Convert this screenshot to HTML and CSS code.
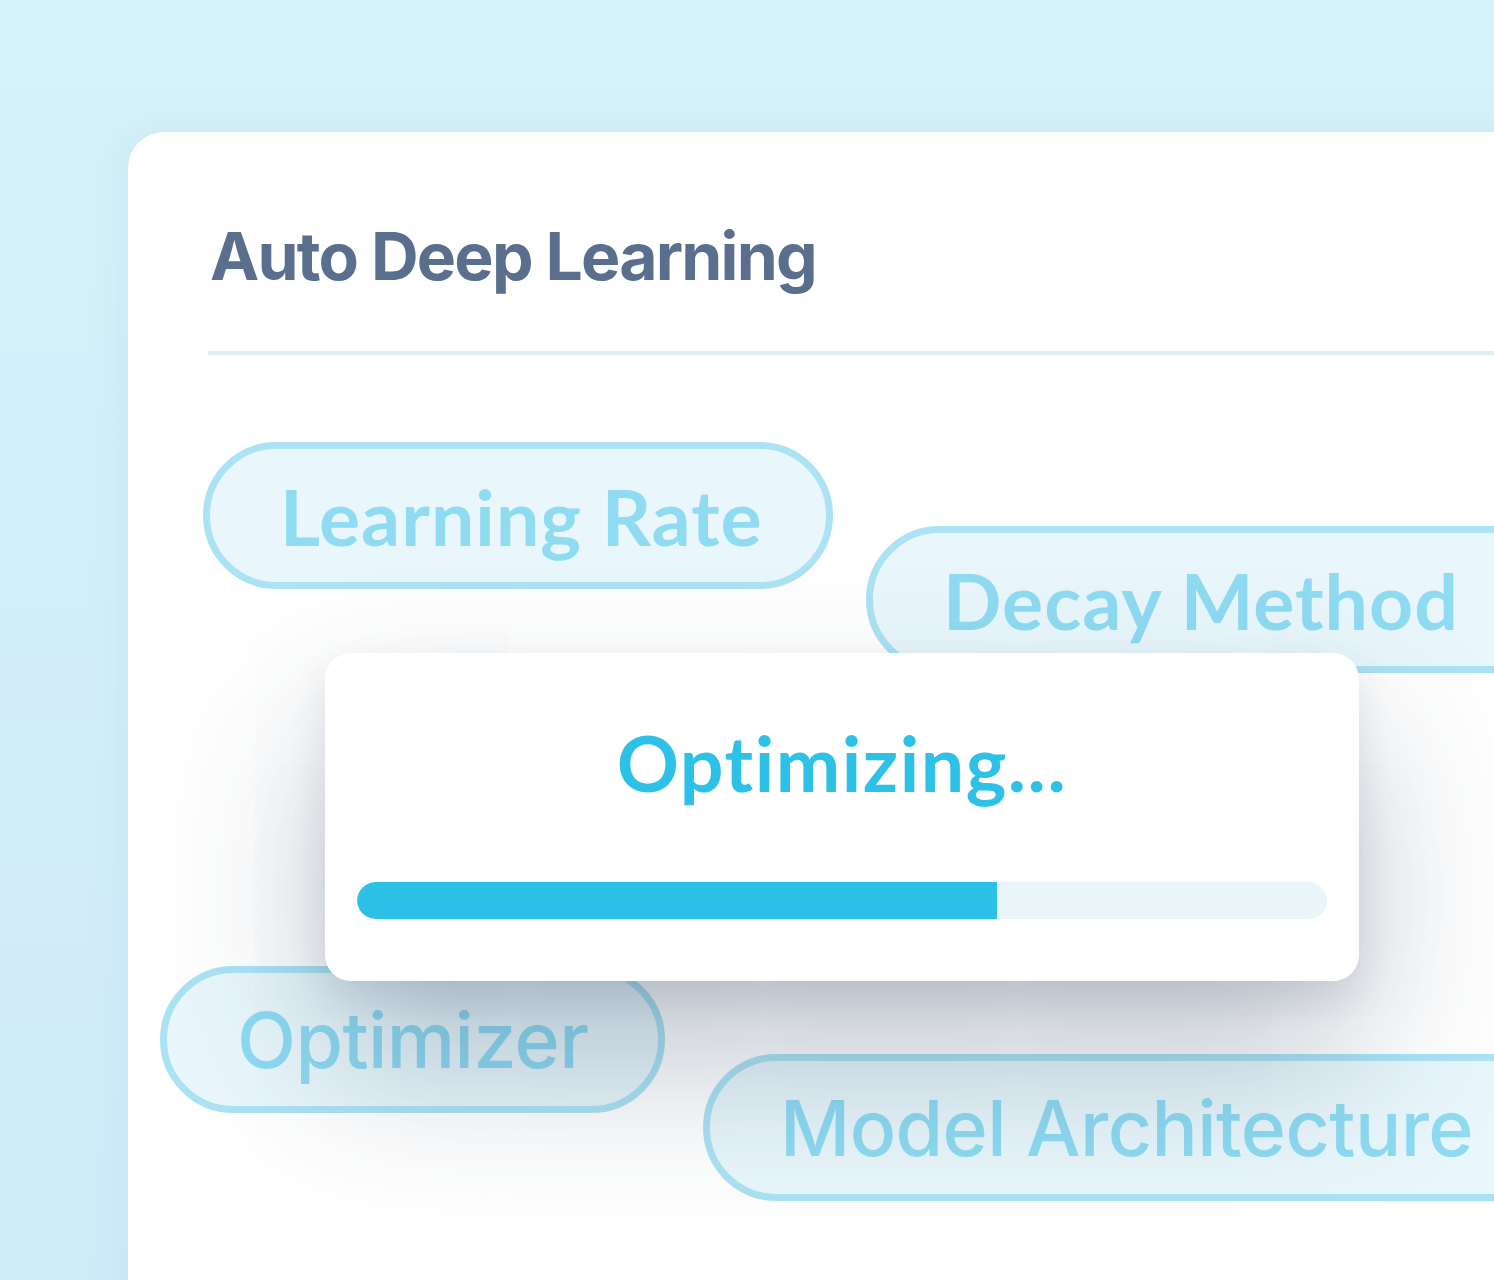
FILE: index.html
```html
<!DOCTYPE html>
<html lang="en">
<head>
<meta charset="utf-8">
<title>Auto Deep Learning</title>
<link rel="stylesheet" href="styles.css">
</head>
<body>
<div class="page">
  <section class="card">
    <h1 class="title">Auto Deep Learning</h1>
    <div class="divider"></div>
    <div class="canvas">
      <span class="pill pill-geo pill-lr">Learning Rate</span>
      <span class="pill pill-geo pill-dm">Decay Method</span>
      <span class="pill pill-grot pill-opt">Optimizer</span>
      <span class="pill pill-grot pill-ma">Model Architecture</span>
      <div class="modal">
        <div class="modal-title">Optimizing...</div>
        <div class="track"><div class="fill" style="width:66%"></div></div>
      </div>
    </div>
  </section>
</div>
</body>
</html>
```
FILE: styles.css
```css
html, body {
  margin: 0;
  padding: 0;
  width: 100%;
  height: 100%;
  overflow: hidden;
}
body {
  background: linear-gradient(180deg, #d6f2fa 0%, #d2eef9 50%, #d0ebf8 100%);
  font-family: "Inter", "Liberation Sans", sans-serif;
}
.page {
  padding: 132px 0 0 128px;
  height: 100%;
  box-sizing: border-box;
}
.card {
  width: 1500px;
  height: 1200px;
  background: #ffffff;
  border-top-left-radius: 36px;
  box-shadow: -6px 0 30px rgba(170, 215, 235, 0.25);
  overflow: hidden;
  display: flex;
  flex-direction: column;
  padding-left: 80px;
  box-sizing: border-box;
}
.title {
  margin: 84px 0 0 2px;
  font-family: "Inter", sans-serif;
  font-weight: 700;
  font-size: 66px;
  line-height: 80px;
  letter-spacing: -1.8px;
  color: #5a6e8e;
}
.divider {
  margin-top: 55px;
  height: 4px;
  background: #e2edf2;
}
.canvas {
  position: relative;
  flex: 1;
  margin-left: -80px;
}
.pill {
  position: absolute;
  height: 147px;
  box-sizing: border-box;
  border: 7px solid #abe3f4;
  background: #e9f7fc;
  border-radius: 80px;
  display: flex;
  align-items: center;
  white-space: nowrap;
  color: #8edbf2;
}
.pill-geo {
  font-family: "Lato", sans-serif;
  font-weight: 700;
  font-size: 77px;
  padding: 0 70px 0 70px;
  letter-spacing: 1px;
}
.pill-grot {
  font-family: "Inter", sans-serif;
  font-weight: 500;
  font-size: 77px;
  letter-spacing: -0.6px;
  padding: 0 70px 0 70px;
}
.pill-lr { left: 75px; top: 87px; width: 630px; }
.pill-dm { left: 738px; top: 171px; width: 800px; }
.pill-opt { left: 32px; top: 611px; width: 505px; }
.pill-ma { left: 575px; top: 699px; width: 900px; }
.modal {
  position: absolute;
  left: 197px;
  top: 298px;
  width: 1034px;
  height: 328px;
  background: #ffffff;
  border-radius: 26px;
  box-shadow: 0 80px 160px rgba(40, 60, 90, 0.3), 0 16px 36px rgba(40, 60, 90, 0.1);
  display: flex;
  flex-direction: column;
  align-items: center;
  padding: 64px 32px 0 32px;
  box-sizing: border-box;
}
.modal-title {
  font-family: "Lato", sans-serif;
  font-weight: 700;
  font-size: 77px;
  line-height: 90px;
  color: #2ec1e8;
  letter-spacing: 1.5px;
}
.track {
  margin-top: 75px;
  align-self: stretch;
  height: 37px;
  border-radius: 19px;
  background: #eaf5f9;
  overflow: hidden;
}
.fill {
  height: 100%;
  background: #2ec1e8;
  border-radius: 19px 0 0 19px;
}
```
